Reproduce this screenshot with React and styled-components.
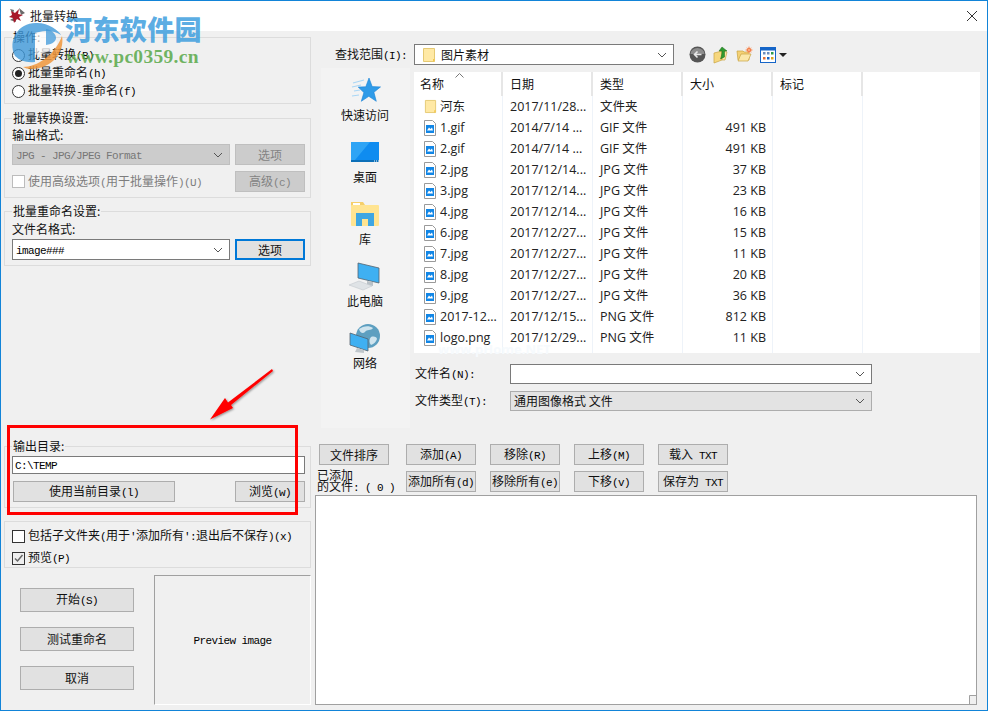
import React from 'react';
import styled, { createGlobalStyle } from 'styled-components';

const CJK = '"Noto Sans CJK SC", "Noto Sans", sans-serif';
const UI = '"Open Sans", "Noto Sans CJK SC", sans-serif';

const files = [
  { name: '河东', date: '2017/11/28...', type: '文件夹', size: '', folder: true },
  { name: '1.gif', date: '2014/7/14 ...', type: 'GIF 文件', size: '491 KB' },
  { name: '2.gif', date: '2014/7/14 ...', type: 'GIF 文件', size: '491 KB' },
  { name: '2.jpg', date: '2017/12/14...', type: 'JPG 文件', size: '37 KB' },
  { name: '3.jpg', date: '2017/12/14...', type: 'JPG 文件', size: '23 KB' },
  { name: '4.jpg', date: '2017/12/14...', type: 'JPG 文件', size: '16 KB' },
  { name: '6.jpg', date: '2017/12/27...', type: 'JPG 文件', size: '15 KB' },
  { name: '7.jpg', date: '2017/12/27...', type: 'JPG 文件', size: '11 KB' },
  { name: '8.jpg', date: '2017/12/27...', type: 'JPG 文件', size: '20 KB' },
  { name: '9.jpg', date: '2017/12/27...', type: 'JPG 文件', size: '36 KB' },
  { name: '2017-12...', date: '2017/12/15...', type: 'PNG 文件', size: '812 KB' },
  { name: 'logo.png', date: '2017/12/29...', type: 'PNG 文件', size: '11 KB' },
];

const GlobalStyle = createGlobalStyle`
  html, body { margin: 0; padding: 0; background: #fff; }
  * { box-sizing: border-box; }
`;

const Window = styled.div`
  position: relative;
  width: 988px;
  height: 711px;
  border: 1px solid #1284d8;
  background: #f0f0f0;
  overflow: hidden;
  font-family: ${CJK};
  font-size: 12px;
  line-height: 14px;
  color: #111;
`;

const TitleBar = styled.div`
  display: flex;
  align-items: center;
  height: 30px;
  padding: 0 9px 0 8px;
  background: #fff;
  gap: 5px;
`;

const TitleText = styled.span`
  flex: 1;
  color: #222;
`;

const Body = styled.div`
  display: flex;
  height: 679px;
`;

const LeftColumn = styled.div`
  display: flex;
  flex-direction: column;
  width: 314px;
  padding-left: 3px;
`;

const Group = styled.fieldset`
  width: 307px;
  height: ${(p) => p.$h}px;
  margin: ${(p) => p.$top || 0}px 0 0;
  padding: 0 5px 0 7px;
  border: 1px solid #dcdcdc;
  min-width: 0;
`;

const Legend = styled.legend`
  height: 12px;
  line-height: 12px;
  padding: 0 1px;
`;

const Latin = styled.span`
  font-family: "Liberation Mono", monospace;
  font-size: 11px;
  letter-spacing: -0.6px;
  color: #000;
  white-space: pre;
`;

const Mixed = ({ children }) => (
  <span>
    {children.split(/([\x20-\x7e]+)/).map((part, i) =>
      i % 2 ? <Latin key={i}>{part}</Latin> : part
    )}
  </span>
);

const OptionRow = styled.div`
  display: flex;
  align-items: center;
  gap: 3px;
  height: ${(p) => p.$h || 18}px;
  margin-top: ${(p) => p.$top || 0}px;
  color: ${(p) => (p.$disabled ? '#7d7d7d' : 'inherit')};
  ${Latin} { color: ${(p) => (p.$disabled ? '#7d7d7d' : '#000')}; }
`;

const RadioDot = styled.span`
  position: relative;
  display: block;
  width: 13px;
  height: 13px;
  border: 1px solid #333;
  border-radius: 50%;
  background: #fff;
  &::after {
    content: '';
    display: ${(p) => (p.$on ? 'block' : 'none')};
    position: absolute;
    inset: 2px;
    border-radius: 50%;
    background: #222;
  }
`;

const CheckBox = styled.span`
  display: flex;
  width: 13px;
  height: 13px;
  border: 1px solid ${(p) => (p.$disabled ? '#bcbcbc' : '#333')};
  background: ${(p) => (p.$checked ? '#eee' : '#fff')};
`;

const FieldLabel = styled.div`
  height: 14px;
  margin-top: ${(p) => p.$top || 0}px;
`;

const ControlRow = styled.div`
  display: flex;
  justify-content: space-between;
  align-items: center;
  margin-top: ${(p) => p.$top || 0}px;
  padding-left: ${(p) => p.$inset || 0}px;
`;

const Combo = styled.div`
  display: flex;
  align-items: center;
  justify-content: space-between;
  width: ${(p) => p.$w}px;
  height: ${(p) => p.$h || 21}px;
  padding: 0 6px 0 3px;
  border: 1px solid ${(p) => (p.$disabled ? '#bfbfbf' : p.$flat ? '#adadad' : '#7a7a7a')};
  background: ${(p) => (p.$disabled ? '#ccc' : p.$flat ? '#e3e3e3' : '#fff')};
  color: ${(p) => (p.$disabled ? '#777' : '#111')};
  ${Latin} { color: ${(p) => (p.$disabled ? '#777' : '#000')}; }
`;

const ComboValue = styled.span`
  display: flex;
  align-items: center;
  gap: 5px;
  padding-left: 4px;
`;

const Button = styled.div`
  display: flex;
  align-items: center;
  justify-content: center;
  white-space: nowrap;
  width: ${(p) => p.$w || 70}px;
  height: ${(p) => p.$h || 21}px;
  border: ${(p) => (p.$focus ? '2px solid #0078d7' : `1px solid ${p.$disabled ? '#bfbfbf' : '#adadad'}`)};
  background: ${(p) => (p.$disabled ? '#ccc' : '#e1e1e1')};
  color: ${(p) => (p.$disabled ? '#838383' : '#111')};
  ${Latin} { color: ${(p) => (p.$disabled ? '#838383' : '#000')}; }
`;

const PathInput = styled.div`
  display: flex;
  align-items: center;
  height: 18px;
  width: 293px;
  margin-top: 4px;
  padding-left: 2px;
  border: 1px solid #7a7a7a;
  background: #fff;
`;

const BottomRow = styled.div`
  display: flex;
  margin-top: 7px;
  height: 130px;
`;

const ActionColumn = styled.div`
  display: flex;
  flex-direction: column;
  gap: 15px;
  width: 150px;
  padding: 13px 0 0 16px;
`;

const PreviewBox = styled.div`
  display: flex;
  align-items: center;
  justify-content: center;
  width: 157px;
  border-top: 1px solid #a0a0a0;
  border-left: 1px solid #a0a0a0;
  border-right: 1px solid #fff;
  border-bottom: 1px solid #fff;
`;

const RightColumn = styled.div`
  display: flex;
  flex-direction: column;
  flex: 1;
  min-width: 0;
`;

const LookRow = styled.div`
  display: flex;
  align-items: center;
  height: 21px;
  margin-top: 13px;
  padding-left: 20px;
`;

const LookLabel = styled.div`
  width: 79px;
`;

const Toolbar = styled.div`
  display: flex;
  align-items: center;
  gap: 7px;
  margin-left: 15px;
`;

const ViewArrow = styled.span`
  width: 0;
  height: 0;
  margin-left: -4px;
  border: 4px solid transparent;
  border-top: 4px solid #222;
  border-bottom: 0;
`;

const DialogArea = styled.div`
  display: flex;
  margin: 3px 0 0 6px;
  height: 360px;
`;

const Sidebar = styled.div`
  width: 89px;
  padding: 7px 1px 0 0;
  background: #f3f3f3;
`;

const PlaceItem = styled.div`
  display: flex;
  flex-direction: column;
  align-items: center;
  height: 62px;
  line-height: 16px;
  color: #111;
`;

const DialogMain = styled.div`
  margin: 4px 0 0 4px;
  width: 566px;
`;

const FileList = styled.div`
  position: relative;
  height: 281px;
  background: #fff;
  font-family: ${UI};
  font-size: 12.5px;
  color: #222;
`;

const FileRow = styled.div`
  display: grid;
  grid-template-columns: 89px 90px 90px 90px 90px 1fr;
  height: ${(p) => p.$h || 21}px;
`;

const HeadCell = styled.div`
  padding-left: ${(p) => p.$pad || 7}px;
  border-right: 2px solid #e6e6e6;
  font-family: ${CJK};
  font-size: 12px;
  line-height: 24px;
  color: #111;
  &:last-child { border-right: 0; }
`;

const Cell = styled.div`
  display: flex;
  align-items: center;
  justify-content: ${(p) => (p.$right ? 'flex-end' : 'flex-start')};
  padding: 0 ${(p) => (p.$right ? 6 : 0)}px 0 ${(p) => p.$pad || 7}px;
  border-right: 1px solid #eef3f9;
  line-height: 16px;
  white-space: nowrap;
  overflow: hidden;
  &:last-child { border-right: 0; }
`;

const IconSlot = styled.span`
  display: flex;
  flex: none;
  width: 16px;
`;

const SortCaret = styled.svg`
  position: absolute;
  left: 41px;
  top: 1px;
`;

const FaintMark = styled.span`
  position: absolute;
  left: 24px;
  top: 273px;
  font-weight: 700;
  font-size: 13px;
  line-height: 8px;
  color: #f6fafd;
`;

const NameRow = styled.div`
  display: flex;
  align-items: center;
  height: 20px;
  margin-top: ${(p) => p.$top}px;
  padding-left: 1px;
`;

const NameLabel = styled.div`
  width: 95px;
`;

const QueueGrid = styled.div`
  display: grid;
  grid-template-columns: 73px repeat(4, 70px);
  grid-auto-rows: 21px;
  column-gap: 14px;
  row-gap: 6px;
  margin: 16px 0 0 4px;
`;

const CountLabel = styled.div`
  margin: -2px 0 0 -2px;
  line-height: 11px;
  white-space: nowrap;
`;

const QueueList = styled.div`
  position: relative;
  width: 662px;
  height: 210px;
  margin-top: 3px;
  border: 1px solid #a0a0a0;
  background: #fff;
`;

const Grip = styled.svg`
  position: absolute;
  right: 0;
  bottom: 0;
`;

const RedFrame = styled.div`
  position: absolute;
  left: 6px;
  top: 424px;
  width: 291px;
  height: 90px;
  border: 3px solid #f00;
`;

const OverlaySvg = styled.svg`
  position: absolute;
  left: ${(p) => p.$x}px;
  top: ${(p) => p.$y}px;
  pointer-events: none;
`;

const WatermarkTitle = styled.div`
  position: absolute;
  left: 64px;
  top: 9px;
  font-family: ${CJK};
  font-weight: 900;
  font-size: 27px;
  line-height: 38px;
  letter-spacing: 0.4px;
  color: rgba(62, 158, 222, 0.85);
`;

const WatermarkUrl = styled.div`
  position: absolute;
  left: 65px;
  top: 46px;
  font-family: "Liberation Serif", serif;
  font-weight: 700;
  font-size: 19.5px;
  line-height: 20px;
  letter-spacing: 0.3px;
  color: rgba(88, 168, 72, 0.85);
`;

const Chevron = () => (
  <svg width="10" height="6" viewBox="0 0 10 6">
    <path d="M1 1l4 4 4-4" fill="none" stroke="#555" strokeWidth="1" />
  </svg>
);

const FolderIcon = ({ size = 14 }) => (
  <svg width={size} height={size + 2} viewBox="0 0 14 16">
    <path d="M1.5 1.5h11v13h-11z" fill="#ffe9a5" stroke="#e5c973" />
    <path d="M11 12h1.5v2.5H11z" fill="#f5c84c" />
  </svg>
);

const ImageFileIcon = () => (
  <svg width="12" height="16" viewBox="0 0 12 16">
    <path d="M.5.5h8l3 3v12H.5z" fill="#fff" stroke="#9a9a9a" />
    <rect x="2" y="5" width="8" height="8" fill="#1186e6" />
    <path d="M3 10.500l2-3 1.500 1.500L8 7.500l1 3z" fill="#fff" />
  </svg>
);

const StarIcon = () => (
  <svg width="32" height="32" viewBox="0 0 32 32">
    <path d="M20 3l3.200 8.600 8.300.3-6.600 5.400 2.400 9-7.500-5-7.500 5 2.600-8.800-5.700-5.400 7.600-.3z" fill="#2f9be8" stroke="#1a83d6" strokeWidth=".6" />
    <path d="M4 8l11-3M3 12l9-2M5 16l6-1M3 21l7-1" stroke="#a9d6f5" strokeWidth="1.200" />
  </svg>
);

const DesktopIcon = () => (
  <svg width="32" height="32" viewBox="0 0 32 32">
    <rect x="2" y="5" width="28" height="20" fill="#0f8cf0" />
    <path d="M2 5h19L6 23H2z" fill="#2ea4f5" />
    <rect x="2" y="23" width="28" height="2" fill="#0b6fb8" />
    <path d="M25 24h1M27 24h1M29 24h1" stroke="#fff" />
  </svg>
);

const LibraryIcon = () => (
  <svg width="32" height="32" viewBox="0 0 32 32">
    <path d="M2 3h12l2 3v3H2z" fill="#f5cf6a" />
    <rect x="4" y="4" width="7" height="2" fill="#fff" />
    <rect x="2" y="6" width="28" height="21" rx="1" fill="#ffe491" />
    <path d="M7 27V14h18v13h-6v-7h-6v7z" fill="#3ea6e2" />
  </svg>
);

const ComputerIcon = () => (
  <svg width="32" height="32" viewBox="0 0 32 32">
    <path d="M9 2l21 5v15L9 17z" fill="#3fb0f2" stroke="#55636e" strokeWidth=".8" />
    <path d="M18 20l6 1v4l-6-1z" fill="#b9c1c7" />
    <path d="M0 24l10-4 13 5-9 4z" fill="#dfe3e6" stroke="#c2c8cc" strokeWidth=".6" />
  </svg>
);

const NetworkIcon = () => (
  <svg width="32" height="32" viewBox="0 0 32 32">
    <circle cx="19" cy="13" r="12" fill="#5d9fc0" />
    <path d="M10 6c4-3 10-4 14-1-2 3-6 1-8 4-2 2-5 1-6-3zM22 14c3-1 6 0 6 2-1 3-3 5-6 6-2-2-2-6 0-8z" fill="#cfe4ee" />
    <path d="M1 10l18 6v12L1 22z" fill="#3fb0f2" stroke="#55636e" strokeWidth=".8" />
    <path d="M8 25l7 2v3l-9-1z" fill="#bfc6cb" />
  </svg>
);

const BackIcon = () => (
  <svg width="17" height="17" viewBox="0 0 17 17">
    <circle cx="8.500" cy="8.500" r="8" fill="#555" />
    <path d="M1.500 8a7 6 0 0 1 14 0z" fill="#8d8d8d" />
    <path d="M12.500 8.500H6M8.500 5.500l-3 3 3 3" fill="none" stroke="#e8e8e8" strokeWidth="1.600" />
  </svg>
);

const UpFolderIcon = () => (
  <svg width="16" height="18" viewBox="0 0 16 18">
    <path d="M1 7l8-2v9l-8 3z" fill="#f6d77e" stroke="#c9a441" strokeWidth=".7" />
    <path d="M9 5l5 1-2 8-3 0z" fill="#fbe7a9" stroke="#c9a441" strokeWidth=".7" />
    <path d="M9 1l5 4h-2.500v6l-4 2c1-3 1.500-5 1.500-8H6z" fill="#2f9a2f" stroke="#1c6d1c" strokeWidth=".5" />
  </svg>
);

const NewFolderIcon = () => (
  <svg width="17" height="17" viewBox="0 0 17 17">
    <path d="M1 5h6l1 1h5v8H2z" fill="#f4d175" stroke="#c9a441" strokeWidth=".7" />
    <path d="M2 15l3-7h10l-3 7z" fill="#fbe7a9" stroke="#c9a441" strokeWidth=".7" />
    <circle cx="13" cy="4" r="2.500" fill="#f0642a" />
    <path d="M13 0v8M9 4h8M10.500 1.500l5 5M15.500 1.500l-5 5" stroke="#f9b48c" strokeWidth=".7" />
  </svg>
);

const ViewIcon = () => (
  <svg width="16" height="16" viewBox="0 0 16 16">
    <rect x=".5" y=".5" width="15" height="15" fill="#fff" stroke="#1565c8" />
    <rect x="1" y="1" width="14" height="2.500" fill="#1565c8" />
    <rect x="3" y="5" width="2.500" height="2.500" fill="#6c8ebf" />
    <rect x="7" y="5" width="2.500" height="2.500" fill="#6c8ebf" />
    <rect x="11" y="5" width="2.500" height="2.500" fill="#2d9a4b" />
    <rect x="3" y="10" width="2.500" height="2.500" fill="#e2703a" />
    <rect x="7" y="10" width="2.500" height="2.500" fill="#1565c8" />
    <rect x="11" y="10" width="2.500" height="2.500" fill="#d9a520" />
  </svg>
);

const AppIcon = () => (
  <svg width="16" height="16" viewBox="0 0 16 16">
    <path d="M10 0l6 5-4 2zM1 12l5-3 1 5zM1 1l4 1-1 4z" fill="#6b6b6b" />
    <path d="M2 3l4 2 4-4-1 5 5 1-4 2 2 4-4-2-3 4-1-5-4-1 3-2z" fill="#a8182a" />
  </svg>
);

export default function App() {
  return (
    <>
      <GlobalStyle />
      <Window>
        <TitleBar>
          <AppIcon />
          <TitleText>批量转换</TitleText>
          <svg width="12" height="12" viewBox="0 0 12 12">
            <path d="M1 1l10 10M11 1L1 11" stroke="#333" strokeWidth="1" />
          </svg>
        </TitleBar>

        <Body>
          <LeftColumn>
            <Group $h={73}>
              <Legend>操作:</Legend>
              <OptionRow $top={3}>
                <RadioDot />
                <Mixed>批量转换(B)</Mixed>
              </OptionRow>
              <OptionRow>
                <RadioDot $on />
                <Mixed>批量重命名(h)</Mixed>
              </OptionRow>
              <OptionRow>
                <RadioDot />
                <Mixed>批量转换-重命名(f)</Mixed>
              </OptionRow>
            </Group>

            <Group $h={86} $top={8}>
              <Legend>批量转换设置:</Legend>
              <FieldLabel $top={4}>输出格式:</FieldLabel>
              <ControlRow $top={2}>
                <Combo $w={218} $disabled>
                  <Mixed>JPG - JPG/JPEG Format</Mixed>
                  <Chevron />
                </Combo>
                <Button $disabled>选项</Button>
              </ControlRow>
              <ControlRow $top={6}>
                <OptionRow $h={21} $disabled>
                  <CheckBox $disabled />
                  <Mixed>使用高级选项(用于批量操作)(U)</Mixed>
                </OptionRow>
                <Button $disabled><Mixed>高级(c)</Mixed></Button>
              </ControlRow>
            </Group>

            <Group $h={61} $top={7}>
              <Legend>批量重命名设置:</Legend>
              <FieldLabel $top={5}>文件名格式:</FieldLabel>
              <ControlRow $top={3}>
                <Combo $w={218}>
                  <Mixed>image###</Mixed>
                  <Chevron />
                </Combo>
                <Button $focus>选项</Button>
              </ControlRow>
            </Group>

            <Group $h={68} $top={174}>
              <Legend>输出目录:</Legend>
              <PathInput><Mixed>C:\TEMP</Mixed></PathInput>
              <ControlRow $top={7} $inset={1}>
                <Button $w={162}><Mixed>使用当前目录(l)</Mixed></Button>
                <Button><Mixed>浏览(w)</Mixed></Button>
              </ControlRow>
            </Group>

            <Group $h={47} $top={13}>
              <OptionRow $h={22} $top={3}>
                <CheckBox />
                <Mixed>包括子文件夹(用于'添加所有':退出后不保存)(x)</Mixed>
              </OptionRow>
              <OptionRow $h={22}>
                <CheckBox $checked>
                  <svg width="11" height="11" viewBox="0 0 11 11">
                    <path d="M2 5.500l2.500 2.500L9.500 2" fill="none" stroke="#666" strokeWidth="1.500" />
                  </svg>
                </CheckBox>
                <Mixed>预览(P)</Mixed>
              </OptionRow>
            </Group>

            <BottomRow>
              <ActionColumn>
                <Button $w={114} $h={24}><Mixed>开始(S)</Mixed></Button>
                <Button $w={114} $h={24}>测试重命名</Button>
                <Button $w={114} $h={24}>取消</Button>
              </ActionColumn>
              <PreviewBox><Mixed>Preview image</Mixed></PreviewBox>
            </BottomRow>
          </LeftColumn>

          <RightColumn>
            <LookRow>
              <LookLabel><Mixed>查找范围(I):</Mixed></LookLabel>
              <Combo $w={260}>
                <ComboValue>
                  <FolderIcon />
                  图片素材
                </ComboValue>
                <Chevron />
              </Combo>
              <Toolbar>
                <BackIcon />
                <UpFolderIcon />
                <NewFolderIcon />
                <ViewIcon />
                <ViewArrow />
              </Toolbar>
            </LookRow>

            <DialogArea>
              <Sidebar>
                <PlaceItem><StarIcon />快速访问</PlaceItem>
                <PlaceItem><DesktopIcon />桌面</PlaceItem>
                <PlaceItem><LibraryIcon />库</PlaceItem>
                <PlaceItem><ComputerIcon />此电脑</PlaceItem>
                <PlaceItem><NetworkIcon />网络</PlaceItem>
              </Sidebar>
              <DialogMain>
                <FileList>
                  <SortCaret width="9" height="5" viewBox="0 0 9 5">
                    <path d="M.5 4.500l4-4 4 4" fill="none" stroke="#777" />
                  </SortCaret>
                  <FileRow $h={24}>
                    <HeadCell $pad={6}>名称</HeadCell>
                    <HeadCell>日期</HeadCell>
                    <HeadCell>类型</HeadCell>
                    <HeadCell>大小</HeadCell>
                    <HeadCell>标记</HeadCell>
                    <HeadCell />
                  </FileRow>
                  {files.map((f) => (
                    <FileRow key={f.name}>
                      <Cell $pad={10}>
                        <IconSlot>
                          {f.folder ? <FolderIcon size={13} /> : <ImageFileIcon />}
                        </IconSlot>
                        {f.name}
                      </Cell>
                      <Cell>{f.date}</Cell>
                      <Cell>{f.type}</Cell>
                      <Cell $right>{f.size}</Cell>
                      <Cell />
                      <Cell />
                    </FileRow>
                  ))}
                  <FileRow $h={5}>
                    <Cell /><Cell /><Cell /><Cell /><Cell /><Cell />
                  </FileRow>
                  <FaintMark>www.pHome.NET</FaintMark>
                </FileList>
                <NameRow $top={11}>
                  <NameLabel><Mixed>文件名(N):</Mixed></NameLabel>
                  <Combo $w={362} $h={20}><span /><Chevron /></Combo>
                </NameRow>
                <NameRow $top={7}>
                  <NameLabel><Mixed>文件类型(T):</Mixed></NameLabel>
                  <Combo $w={362} $h={20} $flat>
                    <span>通用图像格式 文件</span>
                    <Chevron />
                  </Combo>
                </NameRow>
              </DialogMain>
            </DialogArea>

            <QueueGrid>
              <Button>文件排序</Button>
              <Button><Mixed>添加(A)</Mixed></Button>
              <Button><Mixed>移除(R)</Mixed></Button>
              <Button><Mixed>上移(M)</Mixed></Button>
              <Button><Mixed>载入 TXT</Mixed></Button>
              <CountLabel>已添加<br /><Mixed>的文件: ( 0 )</Mixed></CountLabel>
              <Button><Mixed>添加所有(d)</Mixed></Button>
              <Button><Mixed>移除所有(e)</Mixed></Button>
              <Button><Mixed>下移(v)</Mixed></Button>
              <Button><Mixed>保存为 TXT</Mixed></Button>
            </QueueGrid>

            <QueueList>
              <Grip width="7" height="9" viewBox="0 0 7 9">
                <rect width="7" height="9" fill="#f0f0f0" />
                <path d="M.5 9V.5H7" fill="none" stroke="#a0a0a0" />
              </Grip>
            </QueueList>
          </RightColumn>
        </Body>

        <OverlaySvg $x={200} $y={362} width="80" height="64" viewBox="0 0 80 64">
          <defs>
            <filter id="arrowShade" x="-20%" y="-20%" width="140%" height="140%">
              <feDropShadow dx="1" dy="1" stdDeviation="1" floodColor="#000" floodOpacity="0.4" />
            </filter>
          </defs>
          <path d="M9 56.500L24 35l3 4.500L71 6l1 2-42 34 2 3z" fill="#f00" filter="url(#arrowShade)" />
        </OverlaySvg>
        <RedFrame />

        <OverlaySvg $x={6} $y={19} width="60" height="54" viewBox="0 0 60 54">
          <path d="M8 36C0 20 12 2 30 3c12 0 22 8 24 12-6-4-14-5-22-3l-4 1v29c-8 1-15-1-20-6z" fill="rgba(62,152,218,0.8)" />
          <path d="M28 13c9-2 20 0 22 10 0 6-8 9-22 12z" fill="rgba(255,255,255,0.7)" />
          <path d="M39 9c6 1 10 5 10 9 0 3-3 6-10 7z" fill="rgba(62,152,218,0.75)" />
          <path d="M55 16c3 16-10 33-31 33-3 0-6-1-8-2 14 0 32-12 39-31z" fill="rgba(240,150,60,0.85)" />
        </OverlaySvg>
        <WatermarkTitle>河东软件园</WatermarkTitle>
        <WatermarkUrl>www.pc0359.cn</WatermarkUrl>
      </Window>
    </>
  );
}
